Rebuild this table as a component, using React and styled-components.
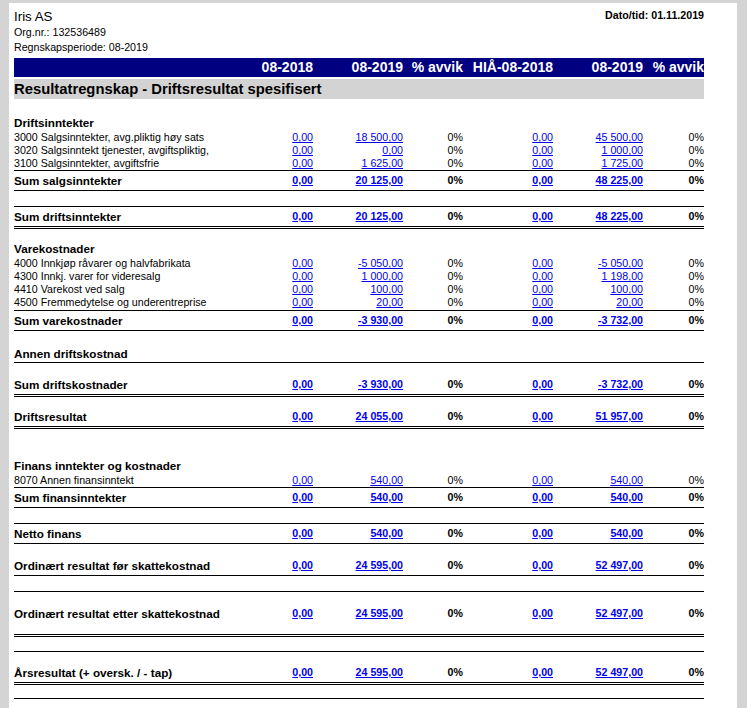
import React from "react";
import styled, { createGlobalStyle, css } from "styled-components";

const GlobalStyle = createGlobalStyle`
  html, body { margin: 0; padding: 0; }
  body {
    background: #d4d4d4;
    font-family: "Liberation Sans", Arial, sans-serif;
    color: #000;
  }
`;

const COLS = "209px 90px 90px 60px 90px 90px 61px";

const Page = styled.div`
  margin: 3px 10px 0 9px;
  background: #fff;
  min-height: 705px;
  padding: 6px 33px 0 5px;
  box-sizing: border-box;
`;

const Header = styled.header`
  display: flex;
  justify-content: space-between;
  align-items: flex-start;
`;

const Company = styled.div`
  font-size: 10pt;
  line-height: 16px;
`;

const Meta = styled.div`
  font-size: 8pt;
  line-height: 15px;
`;

const Stamp = styled.div`
  font-size: 8pt;
  font-weight: bold;
  line-height: 12px;
`;

const ColumnBar = styled.div`
  margin-top: 3px;
  display: grid;
  grid-template-columns: ${COLS};
  height: 19px;
  background: #000080;
  color: #fff;
  font-size: 14px;
  font-weight: bold;
  line-height: 19px;
  white-space: nowrap;
`;

const HeadCell = styled.div`
  text-align: right;
`;

const TitleBar = styled.div`
  margin-top: 2px;
  height: 20px;
  background: #d3d3d3;
  font-size: 14.8px;
  font-weight: bold;
  line-height: 20px;
  white-space: nowrap;
`;

const Spacer = styled.div`
  height: ${(p) => p.$h}px;
`;

const borderFor = (kind) =>
  kind === "double"
    ? "3px double #000"
    : kind === "single"
    ? "1px solid #000"
    : "none";

const Row = styled.div`
  display: grid;
  grid-template-columns: ${COLS};
  align-items: center;
  box-sizing: content-box;
  height: ${(p) => p.$h}px;
  padding-top: ${(p) => p.$pad || 0}px;
  border-top: ${(p) => borderFor(p.$top)};
  border-bottom: ${(p) => borderFor(p.$bottom)};
  font-size: 8pt;
  line-height: 13px;
  white-space: nowrap;
  ${(p) =>
    p.$bold &&
    css`
      font-weight: bold;
    `}
`;

const Label = styled.div`
  font-size: ${(p) => (p.$strong ? "11.7px" : "8pt")};
`;

const NumCell = styled.div`
  text-align: right;
`;

const Amount = styled.a`
  color: #0000ee;
  text-decoration: underline;
`;

const Pct = styled.div`
  text-align: right;
`;

const NB = "\u00a0";
const v = (a, b, c, d) => [a, b.replace(/ /g, NB), "0%", c, d.replace(/ /g, NB), "0%"];

const rows = [
  { t: "sp", h: 14 },
  { t: "head", label: "Driftsinntekter", h: 18 },
  { t: "det", label: "3000 Salgsinntekter, avg.pliktig høy sats", v: v("0,00", "18 500,00", "0,00", "45 500,00") },
  { t: "det", label: "3020 Salgsinntekt tjenester, avgiftspliktig,", v: v("0,00", "0,00", "0,00", "1 000,00") },
  { t: "det", label: "3100 Salgsinntekter, avgiftsfrie", v: v("0,00", "1 625,00", "0,00", "1 725,00") },
  { t: "sum", label: "Sum salgsinntekter", top: "single", bottom: "single", v: v("0,00", "20 125,00", "0,00", "48 225,00") },
  { t: "sp", h: 15 },
  { t: "sum", label: "Sum driftsinntekter", top: "single", bottom: "double", v: v("0,00", "20 125,00", "0,00", "48 225,00") },
  { t: "sp", h: 10 },
  { t: "head", label: "Varekostnader", h: 18 },
  { t: "det", label: "4000 Innkjøp råvarer og halvfabrikata", v: v("0,00", "-5 050,00", "0,00", "-5 050,00") },
  { t: "det", label: "4300 Innkj. varer for videresalg", v: v("0,00", "1 000,00", "0,00", "1 198,00") },
  { t: "det", label: "4410 Varekost ved salg", v: v("0,00", "100,00", "0,00", "100,00") },
  { t: "det", label: "4500 Fremmedytelse og underentreprise", v: v("0,00", "20,00", "0,00", "20,00") },
  { t: "sp", h: 1 },
  { t: "sum", label: "Sum varekostnader", top: "single", bottom: "single", v: v("0,00", "-3 930,00", "0,00", "-3 732,00") },
  { t: "sp", h: 14 },
  { t: "head", label: "Annen driftskostnad", h: 17, bottom: "single" },
  { t: "sp", h: 12 },
  { t: "sum", label: "Sum driftskostnader", bottom: "double", v: v("0,00", "-3 930,00", "0,00", "-3 732,00") },
  { t: "sp", h: 10 },
  { t: "sum", label: "Driftsresultat", bottom: "double", v: v("0,00", "24 055,00", "0,00", "51 957,00") },
  { t: "sp", h: 27 },
  { t: "head", label: "Finans inntekter og kostnader", h: 18 },
  { t: "det", label: "8070 Annen finansinntekt", v: v("0,00", "540,00", "0,00", "540,00") },
  { t: "sum", label: "Sum finansinntekter", top: "single", bottom: "single", v: v("0,00", "540,00", "0,00", "540,00") },
  { t: "sp", h: 15 },
  { t: "sum", label: "Netto finans", top: "single", bottom: "single", v: v("0,00", "540,00", "0,00", "540,00") },
  { t: "sp", h: 12 },
  { t: "sum", label: "Ordinært resultat før skattekostnad", bottom: "single", v: v("0,00", "24 595,00", "0,00", "52 497,00") },
  { t: "sp", h: 15 },
  { t: "sum", label: "Ordinært resultat etter skattekostnad", top: "single", bottom: "double", h: 42, v: v("0,00", "24 595,00", "0,00", "52 497,00") },
  { t: "sp", h: 14 },
  { t: "sum", label: "Årsresultat (+ oversk. / - tap)", top: "single", bottom: "double", pad: 11, v: v("0,00", "24 595,00", "0,00", "52 497,00") },
  { t: "sp", h: 13 },
  { t: "sum", label: "", top: "single", v: null },
];

const Values = ({ values }) =>
  values.map((val, i) =>
    i === 2 || i === 5 ? (
      <Pct key={i}>{val}</Pct>
    ) : (
      <NumCell key={i}>
        <Amount href="#">{val}</Amount>
      </NumCell>
    )
  );

export default function App() {
  return (
    <>
      <GlobalStyle />
      <Page>
        <Header>
          <div>
            <Company>Iris AS</Company>
            <Meta>Org.nr.: 132536489</Meta>
            <Meta>Regnskapsperiode: 08-2019</Meta>
          </div>
          <Stamp>Dato/tid: 01.11.2019</Stamp>
        </Header>
        <ColumnBar>
          <div />
          <HeadCell>08-2018</HeadCell>
          <HeadCell>08-2019</HeadCell>
          <HeadCell>% avvik</HeadCell>
          <HeadCell>HIÅ-08-2018</HeadCell>
          <HeadCell>08-2019</HeadCell>
          <HeadCell>% avvik</HeadCell>
        </ColumnBar>
        <TitleBar>Resultatregnskap - Driftsresultat spesifisert</TitleBar>
        {rows.map((r, i) => {
          if (r.t === "sp") return <Spacer key={i} $h={r.h} />;
          if (r.t === "head")
            return (
              <Row key={i} $h={r.h} $bold $bottom={r.bottom}>
                <Label $strong>{r.label}</Label>
              </Row>
            );
          if (r.t === "det")
            return (
              <Row key={i} $h={13}>
                <Label>{r.label}</Label>
                <Values values={r.v} />
              </Row>
            );
          return (
            <Row key={i} $h={r.h || 19} $pad={r.pad} $bold $top={r.top} $bottom={r.bottom}>
              <Label $strong>{r.label}</Label>
              {r.v && <Values values={r.v} />}
            </Row>
          );
        })}
      </Page>
    </>
  );
}
